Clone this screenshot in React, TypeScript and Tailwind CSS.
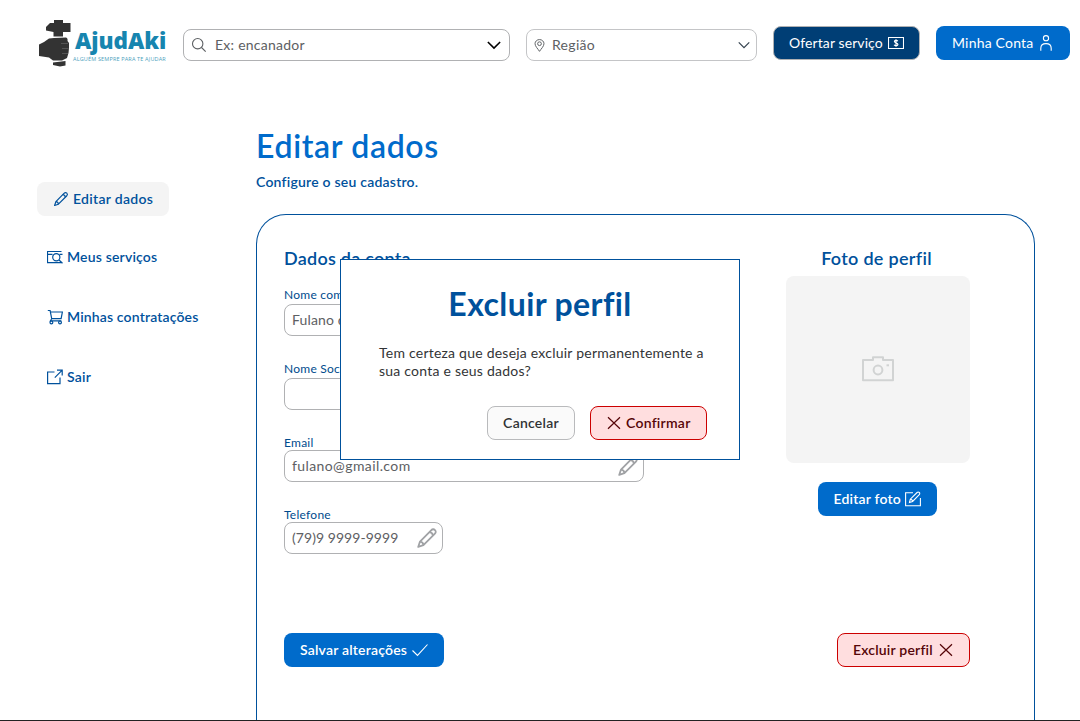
import type { ReactNode } from "react";

type IconProps = { className?: string };

function Svg({ className, box = "0 0 16 16", width = 1.1, children }: IconProps & { box?: string; width?: number; children: ReactNode }) {
  return (
    <svg className={`shrink-0 ${className ?? "size-4"}`} viewBox={box} fill="none" stroke="currentColor" strokeWidth={width}>
      {children}
    </svg>
  );
}

function Pencil({ className, width = 1.2 }: IconProps & { width?: number }) {
  return (
    <Svg className={className} width={width}>
      <path d="M1.6 14.5 2.9 10.6 11 2.4C12 1.4 13 1.4 13.8 2.2 14.6 3 14.6 4 13.6 5L5.4 13.2Z" strokeLinejoin="round" />
      <path d="M2.9 10.6C4.2 10.7 5.3 11.8 5.4 13.2M9.7 3.7C11.1 3.8 12.2 4.9 12.3 6.3" />
    </Svg>
  );
}

function Close({ className }: IconProps) {
  return (
    <Svg className={className} width={1.2}>
      <path d="M2 2.3 14 13.7M14 2.3 2 13.7" />
    </Svg>
  );
}

function Logo() {
  return (
    <div className="flex h-[50px] w-[129px] shrink-0">
      <svg className="h-[50px] w-[33px] shrink-0" viewBox="0 0 33 50" fill="#333">
        <path d="M16 1H25V4H32.5V13H25V17.5H15.5V13L8 11.5V8L12 4H16Z" />
        <path d="M1 25.5 6 23 11 19.5 16 19 28 18.5Q30 19 29.5 22L31 24V29L30.5 34 29 39 24 41.5H15L11 38.5 1 37Z" />
        <path d="M15 43.5 27.5 42V46.5L22 47.5 15 46Z" />
        <path d="M23 24.5H30M24 29.5H30.5M24 34.5H30" stroke="#777" strokeWidth=".5" />
      </svg>
      <div className="flex flex-col pt-[9px] font-['Open_Sans',sans-serif]">
        <span className="ml-1 h-[26px] whitespace-nowrap text-[22.5px] leading-[26px] font-extrabold tracking-[-0.05px] text-[#1785af]">AjudAki</span>
        <span className="ml-[2px] mt-[2px] whitespace-nowrap text-[5.5px] leading-[7px] tracking-[0.16px] text-[#4d9fbd]">ALGUÉM SEMPRE PARA TE AJUDAR</span>
      </div>
    </div>
  );
}

function Field({ label, value, className, gap, tracking = "tracking-[0.4px]" }: { label: string; value: string; className: string; gap: string; tracking?: string }) {
  return (
    <label className="flex flex-col">
      <span className={`text-[12px] leading-[14px] tracking-[0.25px] text-[#004b8d] ${gap}`}>{label}</span>
      <span className={`flex h-8 items-center justify-between rounded-lg border border-[#b0b1b3] bg-white pr-1 pl-[7px] text-[14px] text-[#5d6063] ${className}`}>
        <span className={`mb-0.5 ${tracking}`}>{value}</span>
        <Pencil className="size-[22px] text-[#a0a2a5]" width={1.3} />
      </span>
    </label>
  );
}

function Header() {
  return (
    <header className="flex h-[86px] items-start gap-4 pl-[38px]">
      <div className="pt-[19px]"><Logo /></div>
      <div className="mt-[29px] flex h-8 w-[327px] items-center rounded-lg border border-[#b0b1b3] pr-2 pl-[7px] text-[#5d6063]">
        <Svg><circle cx="6.7" cy="6.7" r="5.2" /><path d="m10.5 10.5 4.2 4.2" /></Svg>
        <span className="mb-0.5 ml-2 flex-1 text-[14px] tracking-[0.25px]">Ex: encanador</span>
        <Svg className="size-[14px] text-black" width={1.8}><path d="m1 4.5 7 7 7-7" /></Svg>
      </div>
      <div className="mt-[29px] flex h-8 w-[231px] items-center rounded-lg border border-[#c4c5c7] pr-[6px] pl-[6px] text-[#5d6063]">
        <Svg className="size-[13px]" width={1.2}>
          <path d="M8 15.2C6 12 2.5 9 2.5 5.8a5.5 5.1 0 0 1 11 0C13.5 9 10 12 8 15.2Z" /><circle cx="8" cy="5.8" r="2.3" />
        </Svg>
        <span className="mb-0.5 ml-[6px] flex-1 text-[14px] tracking-[0.3px]">Região</span>
        <Svg className="size-3 text-[#34424e]" width={1.6}><path d="m1 4.5 7 7 7-7" /></Svg>
      </div>
      <button className="mt-[26px] flex h-[34px] w-[147px] items-center rounded-lg border border-[#b0b1b3] bg-[#003e75] pl-[15px] text-[14px] tracking-[0.1px] whitespace-nowrap text-white">
        <span className="mb-0.5 w-[99px] text-left">Ofertar serviço</span>
        <Svg><path d="M.5 2.5h15v11H.5Z" /><path d="M8 4.3v7.4M9.8 6.2c-.7-1.2-3.4-1-3.4.4 0 1.7 3.5 1 3.5 2.8 0 1.5-3 1.6-3.8.3" strokeWidth="1.2" /></Svg>
      </button>
      <button className="mt-[26px] flex h-[34px] w-[134px] items-center rounded-lg bg-[#006bcb] pl-4 text-[14px] tracking-[0.2px] whitespace-nowrap text-white">
        <span className="mb-0.5 w-[86px] text-left">Minha Conta</span>
        <Svg><circle cx="8" cy="3.2" r="2.6" /><path d="M2.8 15.7v-2.4c0-2.7 2-4.7 5.2-4.7s5.2 2 5.2 4.7v2.4" /></Svg>
      </button>
    </header>
  );
}

function Sidebar() {
  return (
    <nav className="flex w-[256px] shrink-0 flex-col pt-24 pl-[37px] text-[14px] font-semibold whitespace-nowrap text-[#00519c]">
      <a className="flex h-[34px] w-[132px] items-center gap-1 rounded-lg bg-[#f4f4f4] pl-4 tracking-[0.3px]"><Pencil /><span className="mb-0.5">Editar dados</span></a>
      <a className="mt-[33px] ml-[10px] flex h-4 items-center gap-1 tracking-[0.18px]">
        <Svg width={1.2}><path d="M14.5 2.5H.5v11.2h14.7M.5 5.3h5M12 11l3.5 3.2M12.5 5.3h3" /><circle cx="9.3" cy="8.2" r="3.6" /></Svg><span className="mb-0.5">Meus serviços</span>
      </a>
      <a className="mt-11 ml-[10px] flex h-4 items-center gap-1 tracking-[0.15px]">
        <Svg width={1.2}><path d="M.8 1.5h2.3l1.6 8.2-1.3 2.1h11M3.4 3h12l-1.3 6.7H4.7" /><circle cx="4.4" cy="13.4" r="1.4" /><circle cx="13" cy="13.4" r="1.4" /></Svg><span className="mb-0.5">Minhas contratações</span>
      </a>
      <a className="mt-11 ml-[10px] flex h-4 items-center gap-1 tracking-[0.25px]">
        <Svg width={1.2}><path d="M7.5 3H.6v11.6H13V8.5M10 1.2h5.2v5.2M15.2 1.2 7.8 8.6" /></Svg><span className="mb-0.5">Sair</span>
      </a>
    </nav>
  );
}

function AccountCard() {
  return (
    <section className="mt-[23px] flex h-[520px] w-[779px] shrink-0 justify-between rounded-t-[30px] border border-b-0 border-[#00519c] pr-16 pl-[27px]">
      <div className="flex flex-col">
        <h2 className="mt-8 text-[18px] leading-[22px] font-semibold tracking-[0.25px] text-[#00519c]">Dados da conta</h2>
        <div className="mt-[19px] flex flex-col gap-[26px]">
          <Field label="Nome completo" value="Fulano da Silva" className="w-[360px]" gap="mb-[2px]" tracking="tracking-[0.15px]" />
          <Field label="Nome Social" value="" className="w-[360px]" gap="mb-[2px]" />
          <Field label="Email" value="fulano@gmail.com" className="w-[360px]" gap="mb-0" />
          <Field label="Telefone" value="(79)9 9999-9999" className="w-[159px]" gap="mb-0" tracking="tracking-[0.05px]" />
        </div>
        <button className="mt-[79px] flex h-[34px] w-40 items-center rounded-lg bg-[#006bcb] pl-4 text-[14px] font-semibold tracking-[0.2px] whitespace-nowrap text-white">
          <span className="mb-0.5 w-28 text-left">Salvar alterações</span>
          <Svg><path d="m.5 8.5 5 4.9L15.5 2.5" /></Svg>
        </button>
      </div>
      <div className="flex w-[184px] flex-col items-center">
        <h2 className="mt-8 ml-[-3px] text-[18px] leading-[22px] font-semibold tracking-[0.3px] text-[#00519c]">Foto de perfil</h2>
        <div className="mt-[7px] flex h-[187px] w-[184px] items-center justify-center rounded-lg bg-[#f4f4f4] text-[#d1d3d3]">
          <Svg className="mb-0.5 h-8 w-8" box="0 0 32 32" width={2}>
            <path d="M1 7h10V4.3h10V7h10v20.2H1Z" strokeLinejoin="round" /><circle cx="16" cy="17" r="4.4" /><path d="M24.5 12.3h2.5" />
          </Svg>
        </div>
        <button className="mt-[19px] ml-[-2px] flex h-[34px] w-[119px] items-center rounded-lg bg-[#006bcb] pl-4 text-[14px] font-semibold tracking-[0.2px] whitespace-nowrap text-white">
          <span className="mb-0.5 w-[71px] text-left">Editar foto</span>
          <Svg><path d="M8 1.8H.6v12.9h14.8V7M4.5 11.4l.8-3.2 6.8-6.7c1.4-1.4 3.6.7 2.2 2.1l-6.7 6.8ZM5.3 8.2c1.2 0 2.2 1 2.3 2.2" /></Svg>
        </button>
        <button className="mt-[117px] flex h-[34px] w-[133px] items-center self-end rounded-lg border border-[#cc0000] bg-[#ffdedf] pl-[15px] text-[14px] font-semibold tracking-[0.2px] whitespace-nowrap text-[#560508]">
          <span className="mb-0.5 w-[85px] text-left">Excluir perfil</span>
          <Close />
        </button>
      </div>
    </section>
  );
}

function DeleteDialog() {
  return (
    <div role="dialog" className="absolute top-[259px] left-[340px] flex h-[201px] w-[400px] flex-col border border-[#00519c] bg-white">
      <h2 className="mt-6 text-center text-[32px] leading-10 font-bold tracking-[0.4px] text-[#00519c]">Excluir perfil</h2>
      <p className="mt-5 ml-[38px] text-[14px] leading-[18px] tracking-[0.23px] whitespace-nowrap text-[#323436]">
        Tem certeza que deseja excluir permanentemente a<br />sua conta e seus dados?
      </p>
      <div className="mt-[26px] mr-8 flex justify-end gap-[15px] text-[14px] font-semibold tracking-[0.25px]">
        <button className="h-[34px] w-[88px] rounded-lg border border-[#b9babc] bg-[#fafafa] pb-0.5 text-[#303234]">Cancelar</button>
        <button className="flex h-[34px] w-[117px] items-center gap-1 rounded-lg border border-[#cc0000] bg-[#ffdedf] pl-[15px] text-[#560508]"><Close /><span className="mb-0.5">Confirmar</span></button>
      </div>
    </div>
  );
}

export default function App() {
  return (
    <div className="relative h-[721px] w-[1080px] overflow-hidden border-b border-[#222] bg-white font-['Lato',sans-serif]">
      <Header />
      <div className="flex">
        <Sidebar />
        <main className="flex flex-col pt-10">
          <h1 className="text-[32px] leading-10 font-semibold tracking-[0.65px] text-[#006bcb]">Editar dados</h1>
          <p className="mt-[7px] text-[14px] leading-[18px] font-semibold tracking-[0.22px] text-[#00519c]">Configure o seu cadastro.</p>
          <AccountCard />
        </main>
      </div>
      <DeleteDialog />
    </div>
  );
}
